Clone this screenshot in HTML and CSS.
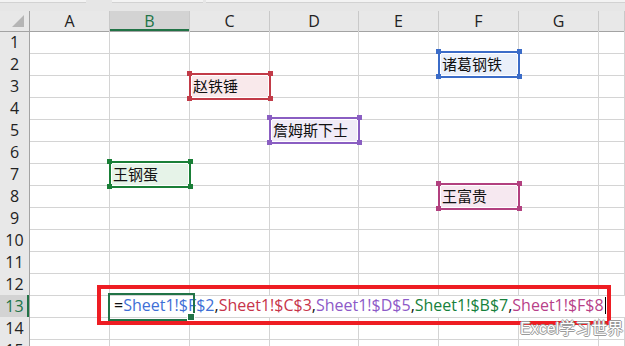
FILE: index.html
```html
<!DOCTYPE html>
<html lang="zh-CN">
<head>
    <meta charset="UTF-8">
    <title>Sheet1</title>
    <link rel="stylesheet" href="styles.css">
</head>
<body>
    <div class="topbar"><span class="p1"></span><span class="p2"></span><span class="p3"></span></div>

    <div class="sheet">
        <div class="row head">
            <div class="corner"></div>
            <div>A</div><div class="sel">B</div><div>C</div><div>D</div><div>E</div><div>F</div><div>G</div><div></div>
        </div>
        <div class="row"><div class="rh">1</div><div></div><div></div><div></div><div></div><div></div><div></div><div></div><div></div></div>
        <div class="row"><div class="rh">2</div><div></div><div></div><div></div><div></div><div></div><div class="ref blue">诸葛钢铁</div><div></div><div></div></div>
        <div class="row"><div class="rh">3</div><div></div><div></div><div class="ref red">赵铁锤</div><div></div><div></div><div></div><div></div><div></div></div>
        <div class="row"><div class="rh">4</div><div></div><div></div><div></div><div></div><div></div><div></div><div></div><div></div></div>
        <div class="row"><div class="rh">5</div><div></div><div></div><div></div><div class="ref purple">詹姆斯下士</div><div></div><div></div><div></div><div></div></div>
        <div class="row"><div class="rh">6</div><div></div><div></div><div></div><div></div><div></div><div></div><div></div><div></div></div>
        <div class="row"><div class="rh">7</div><div></div><div class="ref green">王钢蛋</div><div></div><div></div><div></div><div></div><div></div><div></div></div>
        <div class="row"><div class="rh">8</div><div></div><div></div><div></div><div></div><div></div><div class="ref pink">王富贵</div><div></div><div></div></div>
        <div class="row"><div class="rh">9</div><div></div><div></div><div></div><div></div><div></div><div></div><div></div><div></div></div>
        <div class="row"><div class="rh">10</div><div></div><div></div><div></div><div></div><div></div><div></div><div></div><div></div></div>
        <div class="row"><div class="rh">11</div><div></div><div></div><div></div><div></div><div></div><div></div><div></div><div></div></div>
        <div class="row"><div class="rh">12</div><div></div><div></div><div></div><div></div><div></div><div></div><div></div><div></div></div>
        <div class="row">
            <div class="rh sel">13</div><div></div>
            <div class="active"><span>=</span><span class="f-blue">Sheet1!$F$2</span><span>,</span><span class="f-red">Sheet1!$C$3</span><span>,</span><span class="f-purple">Sheet1!$D$5</span><span>,</span><span class="f-green">Sheet1!$B$7</span><span>,</span><span class="f-pink">Sheet1!$F$8</span><span class="caret"></span></div>
        </div>
        <div class="row"><div class="rh">14</div><div></div><div></div><div></div><div></div><div></div><div></div><div></div><div></div></div>
        <div class="row"><div class="rh">15</div><div></div><div></div><div></div><div></div><div></div><div></div><div></div><div></div></div>
    </div>

    <!-- 标注框 -->
    <div class="mark"></div>
    <div class="watermark">Excel学习世界</div>
</body>
</html>
```

FILE: styles.css
```css
* {
    margin: 0;
    padding: 0;
    box-sizing: border-box;
}

body {
    width: 625px;
    height: 346px;
    overflow: hidden;
    position: relative;
    background: #fff;
    font-family: "Liberation Sans", "Noto Sans CJK SC", sans-serif;
    color: #222;
}

.topbar {
    height: 11px;
    background: #e6e6e6;
    display: flex;
    gap: 3px;
}

.topbar span {
    height: 3px;
    background: #f3f3f3;
    border-bottom: 1px solid #d2d2d2;
}

.topbar .p1 { width: 86px; }
.topbar .p2 { width: 91px; margin-left: 23px; }
.topbar .p3 { flex: 1; }

.row {
    display: grid;
    grid-template-columns: 30px 80px 80px 80px 89px 80px 80px 80px 1fr;
    height: 22px;
}

.row > div {
    border-right: 1px solid #d4d4d4;
    border-bottom: 1px solid #d4d4d4;
    font-size: 15px;
    line-height: 21px;
    white-space: nowrap;
}

.row.head {
    height: 20px;
}

.row.head > div {
    background: #e8e8e8;
    border-right-color: #c9c9c9;
    border-bottom-color: #a3a3a3;
    text-align: center;
    line-height: 20px;
    font-family: "Open Sans", sans-serif;
    font-size: 16px;
}

.row.head .sel {
    background: #d3d3d3;
    color: #217346;
    box-shadow: inset 0 -2px #217346;
}

.row.head .corner {
    border-right-color: #a3a3a3;
    position: relative;
}

.corner::after {
    content: "";
    position: absolute;
    left: 12px;
    top: 4px;
    width: 12px;
    height: 12px;
    background: #b5b5b5;
    clip-path: polygon(100% 0, 100% 100%, 0 100%);
}

.row > .rh {
    background: #e8e8e8;
    border-right-color: #a3a3a3;
    border-bottom-color: #c9c9c9;
    text-align: center;
    font-family: "Open Sans", sans-serif;
    font-size: 16px;
    line-height: 22px;
}

.row > .rh.sel {
    background: #d3d3d3;
    color: #217346;
    box-shadow: inset -2px 0 #217346;
}

/* 引用单元格 */
.row > .ref {
    --c: #c23b48;
    position: relative;
    z-index: 1;
    padding-left: 3px;
    color: #111;
    font-family: "Noto Sans CJK SC", sans-serif;
    font-size: 15px;
    background: #f9e9eb;
}

.ref::before {
    content: "";
    position: absolute;
    left: -1px;
    top: -2px;
    right: -2px;
    bottom: -3px;
    border: 2px solid var(--c);
    box-shadow: inset 0 0 0 1px #fff;
}

.ref::after {
    content: "";
    position: absolute;
    left: -3px;
    top: -4px;
    right: -4px;
    bottom: -4px;
    background:
        linear-gradient(var(--c), var(--c)) left top / 5px 5px no-repeat,
        linear-gradient(var(--c), var(--c)) right top / 5px 5px no-repeat,
        linear-gradient(var(--c), var(--c)) left bottom / 5px 5px no-repeat,
        linear-gradient(var(--c), var(--c)) right bottom / 5px 5px no-repeat;
}

.row > .ref.blue { --c: #3b6cc8; background: #eaf0fa; }
.row > .ref.purple { --c: #8a5ec2; background: #f1ecf8; }
.row > .ref.green { --c: #1a7f37; background: #e6f3e8; }
.row > .ref.pink { --c: #b2407f; background: #f6e8f0; }

/* 编辑中的单元格 */
.row > .active {
    grid-column: 3 / span 7;
    position: relative;
    padding-left: 4px;
    border-right: none;
    font-family: "Open Sans", "Noto Sans CJK SC", sans-serif;
    font-size: 16px;
    line-height: 21px;
    color: #111;
}

.active::before {
    content: "";
    position: absolute;
    left: -2px;
    top: -2px;
    width: 83px;
    height: 24px;
    border: 2px solid #217346;
}

.active::after {
    content: "";
    position: absolute;
    left: 77px;
    top: 18px;
    width: 6px;
    height: 6px;
    background: #217346;
    border: 1px solid #fff;
}

.f-blue { color: #3e6fd6; }
.f-red { color: #c7344a; }
.f-purple { color: #8d5ac8; }
.f-green { color: #16813c; }
.f-pink { color: #b83f88; }

.caret {
    display: inline-block;
    width: 1px;
    height: 17px;
    margin-left: 1px;
    vertical-align: -3px;
    background: #000;
}

.mark {
    position: absolute;
    left: 97px;
    top: 285px;
    width: 514px;
    height: 40px;
    border: 4px solid #ee1d23;
}

.watermark {
    position: absolute;
    left: 520px;
    top: 320px;
    font-size: 16px;
    line-height: 18px;
    color: #fff;
    font-family: "Liberation Sans", "Noto Sans CJK SC", sans-serif;
    text-shadow: 1px 0 #9a9a9a, -1px 0 #9a9a9a, 0 1px #9a9a9a, 0 -1px #9a9a9a;
}
```
